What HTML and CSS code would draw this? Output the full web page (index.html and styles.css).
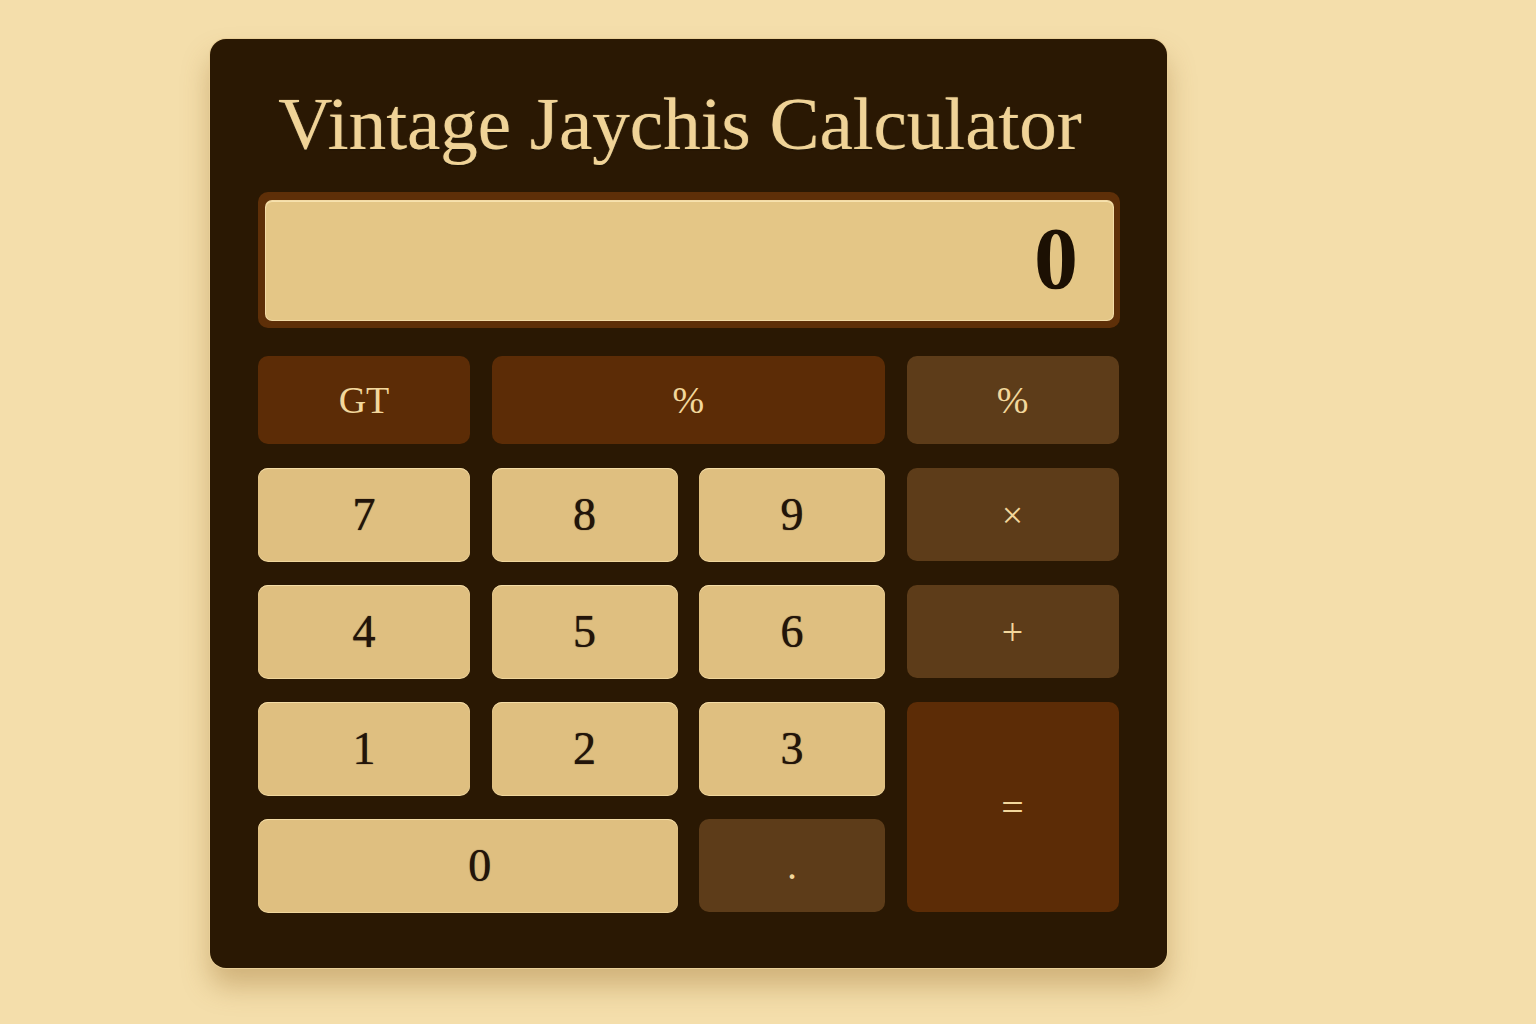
FILE: index.html
```html
<!DOCTYPE html>
<html lang="en">
<head>
<meta charset="utf-8">
<title>Vintage Jaychis Calculator</title>
<link rel="stylesheet" href="styles.css">
</head>
<body>
<main class="calc">
  <h1 class="title">Vintage Jaychis Calculator</h1>
  <div class="display">
    <div class="screen">0</div>
  </div>
  <div class="keys">
    <button class="key rust">GT</button>
    <button class="key rust span2">%</button>
    <button class="key brown">%</button>
    <button class="key light">7</button>
    <button class="key light">8</button>
    <button class="key light">9</button>
    <button class="key brown">×</button>
    <button class="key light">4</button>
    <button class="key light">5</button>
    <button class="key light">6</button>
    <button class="key brown">+</button>
    <button class="key light">1</button>
    <button class="key light">2</button>
    <button class="key light">3</button>
    <button class="key rust tall">=</button>
    <button class="key light span2 zero">0</button>
    <button class="key brown dot">.</button>
  </div>
</main>
</body>
</html>
```
FILE: styles.css
```css
html, body {
  margin: 0;
  padding: 0;
}
body {
  background: #f4deab;
  width: 1536px;
  height: 1024px;
  overflow: hidden;
  font-family: "Liberation Serif", "Times New Roman", serif;
}
.calc {
  box-sizing: border-box;
  margin: 39px 0 0 210px;
  width: 957px;
  height: 929px;
  background: #2a1803;
  border-radius: 16px;
  padding: 47px 47px 0 48px;
  box-shadow: 0 0 0 1px #e9cf98, 0 18px 28px rgba(140, 95, 30, 0.35);
}
.title {
  margin: 0 0 30px 0;
  font-weight: normal;
  font-size: 75px;
  line-height: 76px;
  text-align: center;
  color: #f0d397;
  padding-right: 18px;
  text-shadow: 0 1px 1px rgba(0, 0, 0, 0.6), 0 0 1px #f0d397;
}
.display {
  box-sizing: border-box;
  height: 136px;
  background: #5e2f08;
  border-radius: 10px;
  padding: 9px 7px 8px 8px;
}
.screen {
  box-sizing: border-box;
  height: 100%;
  background: #e4c686;
  border-radius: 6px;
  box-shadow: inset 0 1px 0 #f7e2ae, 0 0 0 1px #f3dba6;
  display: flex;
  align-items: center;
  justify-content: flex-end;
  padding: 0 35px 4px 0;
  font-size: 88px;
  font-weight: bold;
  color: #1c1003;
}
.keys {
  margin-top: 28px;
  display: grid;
  grid-template-columns: 212px 186px 186px 212px;
  grid-template-rows: 88px 93px 93px 93px 93px;
  column-gap: 21.5px;
  row-gap: 24px;
}
.key {
  border: none;
  border-radius: 10px;
  font-family: "Liberation Serif", "Times New Roman", serif;
  font-size: 44px;
  display: flex;
  align-items: center;
  justify-content: center;
  padding: 0;
  cursor: pointer;
}
.light {
  background: #dfbf80;
  color: #22140a;
  box-shadow: inset 0 1px 0 #f4dca6, 0 1px 0 #f0d69c;
  font-size: 46px;
  text-shadow: 0 0 1px #22140a;
}
.rust {
  background: #5c2c06;
  color: #f2d79c;
  font-size: 38px;
}
.brown {
  background: #5d3c19;
  color: #f2d79c;
  font-size: 38px;
}
.span2 {
  grid-column: span 2;
}
.zero {
  padding-left: 24px;
}
.tall {
  grid-row: span 2;
  font-size: 40px;
}
.dot {
  font-size: 40px;
}
```
